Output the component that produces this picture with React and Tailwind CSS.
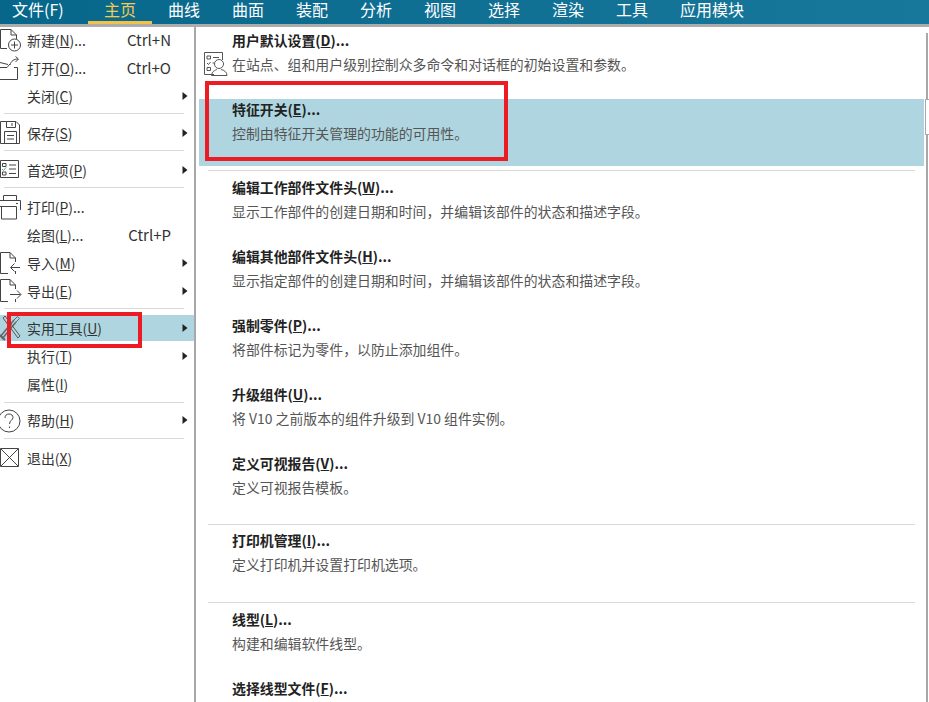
const FONT = "font-['Noto_Sans_CJK_SC','Microsoft_YaHei',sans-serif]";

const Svg = ({ children }) => (
  <svg width="27" height="28" viewBox="0 0 27 28" fill="none" stroke="#444" strokeWidth="1" className="shrink-0">
    {children}
  </svg>
);

const icons = {
  new: (
    <Svg>
      <path d="M7 21.500H0.500V2.500H11L16.500 8V12M11 2.500V8H16.500" />
      <circle cx="14.500" cy="18" r="6" />
      <path d="M14.500 14.500V21.500M11 18H18" />
    </Svg>
  ),
  open: (
    <Svg>
      <path d="M0 7.500L8 9.500M0 12.500H7L10 9M14 12.500H17.500V24.500H0" />
      <path d="M10 10C11 6 14 4 18 4M15.500 1.500L18.500 4L15.500 7" />
    </Svg>
  ),
  save: (
    <Svg>
      <path d="M0.500 23.500V1.500H16L19.500 5V23.500H0.500" />
      <path d="M6.500 1.500V7.500H15.500V1.500M12 3V6" />
      <path d="M4.500 23.500V11.500H16.500V23.500M7 15.500H14M7 19H14" />
    </Svg>
  ),
  prefs: (
    <Svg>
      <path d="M0.500 20.500V3.500H18.500V20.500H0.500" />
      <path d="M2.500 6.500H6V9.500H2.500ZM2.500 15H6V18H2.500Z" />
      <path d="M9 8H16M9 12H16M9 16.500H16" />
      <path d="M2 12L3.500 13.500L6 10.500" stroke="#5a7" />
    </Svg>
  ),
  print: (
    <Svg>
      <path d="M3.500 6.500V1.500H16.500V6.500" />
      <path d="M0 6.500H20.500V16M0 12.500H16.500V25H1.500V12.500" />
      <path d="M18 9.500H16" />
    </Svg>
  ),
  import: (
    <Svg>
      <path d="M8 23.500H0.500V2.500H10L15.500 8V12M10 2.500V8H15.500" />
      <path d="M20 17.500H11M14.500 13.500L10.500 17.500L14.500 21.500M15.500 21V24" />
    </Svg>
  ),
  export: (
    <Svg>
      <path d="M8 23.500H0.500V1.500H10L15.500 7V11M10 1.500V7H15.500" />
      <path d="M10 16.500H20.500M17 12.500L21 16.500L17 20.500M15.500 21V24" />
    </Svg>
  ),
  tools: (
    <Svg>
      <path d="M0 22L14 5M2 24L16 7" stroke="#666" strokeWidth="1.500" />
      <path d="M14 5L17.500 1.500L19.500 3.500L16 7" stroke="#666" />
      <path d="M3 3L18 23L20 21L5 1Z" stroke="#555" />
      <path d="M0 20L5 25" stroke="#666" strokeWidth="2" />
    </Svg>
  ),
  help: (
    <Svg>
      <circle cx="9" cy="14" r="11" />
      <path d="M5 11C5 8.500 6.500 7 9 7C11.500 7 13 8.500 13 10.500C13 13 9.500 13.500 9.500 17" />
      <path d="M9.500 19.500V21" />
    </Svg>
  ),
  exit: (
    <Svg>
      <path d="M0.500 21.500V3.500H18.500V21.500H0.500" />
      <path d="M1 4L18 21M18 4L1 21" />
    </Svg>
  ),
};

const leftItems = [
  { pre: '新建(', key: 'N', post: ')...', shortcut: 'Ctrl+N', icon: 'new' },
  { pre: '打开(', key: 'O', post: ')...', shortcut: 'Ctrl+O', icon: 'open' },
  { pre: '关闭(', key: 'C', post: ')', arrow: true },
  { sep: 'h-[9px] pt-[2px]' },
  { pre: '保存(', key: 'S', post: ')', arrow: true, icon: 'save' },
  { sep: 'h-[9px] pt-[2px]' },
  { pre: '首选项(', key: 'P', post: ')', arrow: true, icon: 'prefs' },
  { sep: 'h-[9px] pt-[2px]' },
  { pre: '打印(', key: 'P', post: ')...', icon: 'print' },
  { pre: '绘图(', key: 'L', post: ')...', shortcut: 'Ctrl+P' },
  { pre: '导入(', key: 'M', post: ')', arrow: true, icon: 'import' },
  { pre: '导出(', key: 'E', post: ')', arrow: true, icon: 'export' },
  { sep: 'h-[9px] pt-[2px]' },
  { pre: '实用工具(', key: 'U', post: ')', arrow: true, icon: 'tools', active: true },
  { pre: '执行(', key: 'T', post: ')', arrow: true },
  { pre: '属性(', key: 'I', post: ')' },
  { sep: 'h-[8px] pt-[3px]' },
  { pre: '帮助(', key: 'H', post: ')', arrow: true, icon: 'help' },
  { sep: 'h-[10px] pt-[3px]' },
  { pre: '退出(', key: 'X', post: ')', icon: 'exit' },
];

const rightItems = [
  { pre: '用户默认设置(', key: 'D', desc: '在站点、组和用户级别控制众多命令和对话框的初始设置和参数。', userIcon: true },
  { pre: '特征开关(', key: 'E', desc: '控制由特征开关管理的功能的可用性。', active: true },
  { sep: 'h-[9px] pt-[2px]' },
  { pre: '编辑工作部件文件头(', key: 'W', desc: '显示工作部件的创建日期和时间，并编辑该部件的状态和描述字段。' },
  { pre: '编辑其他部件文件头(', key: 'H', desc: '显示指定部件的创建日期和时间，并编辑该部件的状态和描述字段。' },
  { pre: '强制零件(', key: 'P', desc: '将部件标记为零件，以防止添加组件。' },
  { pre: '升级组件(', key: 'U', desc: '将 V10 之前版本的组件升级到 V10 组件实例。' },
  { pre: '定义可视报告(', key: 'V', desc: '定义可视报告模板。' },
  { sep: 'h-[8px] pt-[2px]' },
  { pre: '打印机管理(', key: 'I', desc: '定义打印机并设置打印机选项。' },
  { sep: 'h-[10px] pt-[3px]' },
  { pre: '线型(', key: 'L', desc: '构建和编辑软件线型。' },
  { pre: '选择线型文件(', key: 'F', desc: '' },
];

const tabs = ['曲线', '曲面', '装配', '分析', '视图', '选择', '渲染', '工具'];

function TabBar() {
  return (
    <div className="border-b-[3px] border-[#acacac]">
      <div className="flex h-6 bg-linear-to-r from-[#06678b] to-[#18789b] text-[16px] leading-[18px] text-white">
        <div className="w-[88px] pl-3">文件(F)</div>
        <div className="h-6 w-16 border-b-[3px] border-[#f2c246] text-center text-[#f5ca4e]">主页</div>
        {tabs.map((tab) => (
          <div key={tab} className="w-16 text-center">{tab}</div>
        ))}
        <div className="w-24 text-center">应用模块</div>
      </div>
    </div>
  );
}

function LeftMenu() {
  return (
    <div className="w-[196px] shrink-0 border-r-2 border-[#a8a8a8] bg-white text-[13.9px] text-[#333]">
      {leftItems.map((item, i) => {
        if (item.sep) {
          return (
            <div key={i} className={item.sep}>
              <div className="ml-1 h-[1px] w-[180px] bg-[#d9d9d9]" />
            </div>
          );
        }
        return (
          <div
            key={i}
            className={`mb-[2px] flex h-[26px] items-center overflow-hidden ${item.active ? 'bg-[#afd6e0]' : ''}`}
          >
            <div className="h-7 w-[27px] shrink-0 self-start">{item.icon && icons[item.icon]}</div>
            <span className="flex-1 leading-[26px]">
              {item.pre}<u>{item.key}</u>{item.post}
            </span>
            {item.shortcut && <span className="mr-[23px] text-[15px]">{item.shortcut}</span>}
            {item.arrow && (
              <svg width="6" height="10" viewBox="0 0 6 10" className="mr-[6px] shrink-0">
                <path d="M0.500 1L5.500 5L0.500 9Z" fill="#222" />
              </svg>
            )}
          </div>
        );
      })}
    </div>
  );
}

function UserIcon() {
  return (
    <svg width="25" height="26" viewBox="0 0 25 26" fill="none" stroke="#555" strokeWidth="1">
      <path d="M11 23.500H1.500V1.500H19.500V9" />
      <path d="M4 5H7.500V8H4ZM4 16.500H7.500V19.500H4ZM10 6.500H16M9.500 12H11" />
      <path d="M4 12L5.500 13.500L7.500 11" />
      <circle cx="16" cy="13" r="4.500" fill="#fff" />
      <path d="M8.500 24.500C9 20.500 12 19 14 18.500M18 18.500C21 19 24 21 24 24.500H8.500" />
    </svg>
  );
}

function RightPanel() {
  return (
    <div className="h-full w-[728px] overflow-hidden bg-white pt-[3px] pl-[3px]">
      {rightItems.map((item, i) => {
        if (item.sep) {
          return (
            <div key={i} className={item.sep}>
              <div className="ml-[9px] h-[1px] w-[707px] bg-[#dcdad6]" />
            </div>
          );
        }
        return (
          <div key={i} className={`mb-[2px] flex h-[67px] ${item.active ? 'bg-[#afd6e0]' : ''}`}>
            <div className="flex w-[33px] shrink-0 items-center justify-center">
              {item.userIcon && <UserIcon />}
            </div>
            <div>
              <div className="h-[22px] text-[13.9px] leading-[20px] font-bold text-[#222]">
                {item.pre}<u>{item.key}</u>)...
              </div>
              <div className="mt-[2px] h-[22px] text-[13.9px] leading-[20px] text-[#555]">{item.desc}</div>
            </div>
          </div>
        );
      })}
    </div>
  );
}

export default function App() {
  return (
    <div className={`relative h-[702px] w-[929px] overflow-hidden bg-white ${FONT}`}>
      <TabBar />
      <div className="flex h-[675px]">
        <LeftMenu />
        <RightPanel />
        <div className="relative w-[5px] bg-white pt-[6px] pl-[2px]">
          <div className="h-full w-[2px] bg-[#a8a8a8]" />
          <div className="absolute top-[72px] left-[1px] h-[36px] w-[4px] border border-r-0 border-[#a8a8a8] bg-white" />
        </div>
      </div>
      <div className="pointer-events-none absolute top-[81px] left-[205px] h-[80px] w-[303px] border-4 border-[#ed1c24]" />
      <div className="pointer-events-none absolute top-[312px] left-[7px] h-[36px] w-[135px] border-4 border-[#ed1c24]" />
    </div>
  );
}
